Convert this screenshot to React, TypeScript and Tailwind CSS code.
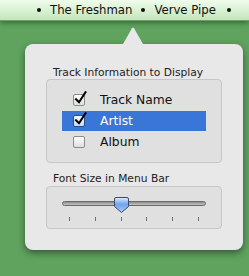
const menuFont = { fontFamily: '"DejaVu Sans Condensed", "Liberation Sans", sans-serif' }

type Row = { label: string; checked: boolean; selected?: boolean }

const rows: Row[] = [
  { label: 'Track Name', checked: true },
  { label: 'Artist', checked: true, selected: true },
  { label: 'Album', checked: false },
]

function Dot() {
  return <span className="block h-[4px] w-[4px] shrink-0 rounded-full bg-[#111]" />
}

function Checkbox({ checked, selected }: { checked: boolean; selected?: boolean }) {
  return (
    <span className="relative block h-[12px] w-[12px] shrink-0">
      <span
        className={
          selected
            ? 'block h-[12px] w-[12px] rounded-[2px] border border-[#2c4f8f] bg-gradient-to-b from-[#f4f8ff] to-[#c6dbf7]'
            : 'block h-[12px] w-[12px] rounded-[2px] border border-[#8c8c8c] bg-gradient-to-b from-[#ffffff] to-[#dedede]'
        }
      />
      {checked && (
        <svg className="absolute left-[1px] top-[-3px]" width="13" height="14" viewBox="0 0 13 14">
          <path d="M2 8.2 L5 11.2 L11.5 1.2" fill="none" stroke="#000" strokeWidth="2" strokeLinecap="square" />
        </svg>
      )}
    </span>
  )
}

function Knob() {
  return (
    <svg width="15" height="16" viewBox="0 0 15 16">
      <defs>
        <linearGradient id="knob" x1="0" y1="0" x2="0" y2="1">
          <stop offset="0" stopColor="#e4eefc" />
          <stop offset="0.45" stopColor="#6fa3ec" />
          <stop offset="1" stopColor="#a9ccf7" />
        </linearGradient>
      </defs>
      <path
        d="M2 0.5 H13 Q14.5 0.5 14.5 2 V9.5 L7.5 15.5 L0.5 9.5 V2 Q0.5 0.5 2 0.5 Z"
        fill="url(#knob)"
        stroke="#3b4b6b"
        strokeWidth="1"
      />
    </svg>
  )
}

export default function App() {
  return (
    <div
      className="h-[276px] w-[249px] overflow-hidden bg-[#5fa35f]"
      style={{ fontFamily: '"DejaVu Sans", "Liberation Sans", sans-serif' }}
    >
      <div
        className="relative z-10 flex h-[21px] items-center border-b border-[#6f9c6a] bg-gradient-to-b from-[#f0fcec] to-[#c3e6bb] pl-[37px] text-[13px] text-[#111] shadow-[0_2px_5px_rgba(0,40,0,0.45)]"
        style={menuFont}
      >
        <Dot />
        <span className="ml-[9px] whitespace-nowrap">The Freshman</span>
        <span className="ml-[9px]">
          <Dot />
        </span>
        <span className="ml-[9px] whitespace-nowrap">Verve Pipe</span>
        <span className="ml-[11px]">
          <Dot />
        </span>
      </div>

      <div className="ml-[123px] mt-[6px] h-[17px] w-[20px]">
        <svg width="20" height="17" viewBox="0 0 20 17" className="block">
          <path d="M0 17 L9 1.2 Q10 0 11 1.2 L20 17 Z" fill="#e8e8e8" />
        </svg>
      </div>

      <div className="ml-[25px] h-[206px] w-[218px] rounded-[8px] bg-[#e8e8e8] pl-[21px] pt-[22px] shadow-[0_3px_7px_rgba(0,0,0,0.45)]">
        <p className="pl-[7px] text-[10.7px] leading-[13px] text-[#222]">Track Information to Display</p>
        <div className="flex h-[84px] w-[176px] flex-col gap-[1px] rounded-[4px] border border-[#c6c6c6] bg-[#e0e0e0] px-[15px] py-[10px]">
          {rows.map((row) => (
            <div
              key={row.label}
              className={
                row.selected
                  ? 'flex h-[20px] items-center bg-[#3a76d8] pl-[11px] text-white'
                  : 'flex h-[20px] items-center pl-[11px] text-[#111]'
              }
            >
              <Checkbox checked={row.checked} selected={row.selected} />
              <span className="ml-[15px] text-[12.3px] leading-none">{row.label}</span>
            </div>
          ))}
        </div>

        <p className="mt-[9px] pl-[7px] text-[10.7px] leading-[14px] text-[#222]">Font Size in Menu Bar</p>
        <div className="h-[43px] w-[176px] rounded-[4px] border border-[#c6c6c6] bg-[#e0e0e0] px-[15px] pt-[10px]">
          <div className="relative h-[16px] w-[144px]">
            <div className="absolute left-0 right-0 top-[4px] h-[5px] rounded-full border border-[#6a6a6a] bg-gradient-to-b from-[#8d8d8d] to-[#c4c4c4]" />
            <div className="absolute left-[52px] top-0">
              <Knob />
            </div>
          </div>
          <div className="mt-[4px] flex w-[144px] justify-between px-[7px]">
            {[0, 1, 2, 3, 4, 5].map((i) => (
              <span key={i} className="block h-[4px] w-[1px] bg-[#6e6e6e]" />
            ))}
          </div>
        </div>
      </div>
    </div>
  )
}
